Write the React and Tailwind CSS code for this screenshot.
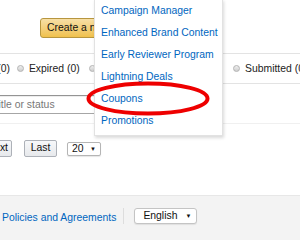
const Radio = () => (
  <span className="w-[7px] h-[7px] rounded-full border border-[#b3b3b3] bg-gradient-to-b from-[#eeeeee] to-[#cfcfcf] shrink-0" />
);

const menuItems = [
  "Campaign Manager",
  "Enhanced Brand Content",
  "Early Reviewer Program",
  "Lightning Deals",
  "Coupons",
  "Promotions",
];

const App = () => {
  return (
    <div className="relative w-[300px] h-[240px] overflow-hidden bg-white font-['Liberation_Sans',Arial,sans-serif] text-[10.4px] text-[#222]">

      {/* Header with create button */}
      <div className="h-[54px] pt-[18px] pl-[40px] border-b border-[#e3e3e3]">
        <button className="h-[20px] px-[6px] rounded-[3px] border border-[#b7963f] bg-gradient-to-b from-[#f7dfa5] to-[#f0c14b] text-[#111] whitespace-nowrap leading-none">
          Create a new coupon
        </button>
      </div>

      {/* Status filter */}
      <div className="h-[30px] flex items-center whitespace-nowrap border-b border-[#e3e3e3]">
        <span className="-ml-[34px] shrink-0">Active (0)</span>
        <div className="flex items-center ml-[7px] shrink-0">
          <Radio />
          <span className="ml-[5px]">Expired (0)</span>
        </div>
        <div className="flex items-center ml-[9px] shrink-0">
          <Radio />
          <span className="ml-[5px]">Running (0)</span>
        </div>
        <div className="flex items-center ml-[78px] shrink-0">
          <Radio />
          <span className="ml-[5px]">Submitted (0)</span>
        </div>
      </div>

      {/* Search */}
      <div className="h-[40px] pt-[11px] border-b border-[#f0f0f0]">
        <div className="-ml-[56px] w-[200px] h-[19px] border border-[#a6a6a6] border-t-[#949494] rounded-[2px] flex items-center pl-[1px] text-[#777] whitespace-nowrap shadow-[inset_0_1px_0_rgba(0,0,0,0.07)]">
          Search by title or status
        </div>
      </div>

      {/* Pagination */}
      <div className="h-[71px] pt-[16px] flex items-start">
        <button className="-ml-[22px] w-[34px] h-[17px] pr-[3px] rounded-[2px] border border-[#adb1b8] bg-gradient-to-b from-[#f7f8fa] to-[#e7e9ec] text-[#111] leading-none text-right">
          Next
        </button>
        <button className="ml-[12px] w-[33px] h-[17px] rounded-[2px] border border-[#adb1b8] bg-gradient-to-b from-[#f7f8fa] to-[#e7e9ec] text-[#111] leading-none">
          Last
        </button>
        <div className="ml-[10px] mt-[2px] w-[34px] h-[14px] rounded-[2px] border border-[#b5b5b5] bg-white flex items-center justify-between px-[4px] text-[#111] shadow-[0_1px_1px_rgba(0,0,0,0.1)]">
          <span>20</span>
          <span className="text-[6px]">▼</span>
        </div>
      </div>

      {/* Footer */}
      <div className="h-[45px] border-t border-[#e7e7e7] bg-[#f3f3f3] pt-[12px] pl-[2px] flex items-start whitespace-nowrap">
        <a className="mt-[2px] text-[#0066c0]">Policies and Agreements</a>
        <span className="ml-[7px] w-px h-[16px] bg-[#dddddd]" />
        <div className="ml-[10px] w-[63px] h-[16px] rounded-[3px] border border-[#c4c4c4] bg-white flex items-center justify-between pl-[8px] pr-[5px] text-[#111] shadow-[0_1px_1px_rgba(0,0,0,0.08)]">
          <span>English</span>
          <span className="text-[6px]">▼</span>
        </div>
      </div>

      {/* Dropdown menu */}
      <div className="absolute left-[94px] top-[-1px] w-[129px] pb-[3px] bg-white border border-[#e2e2e2] shadow-[1px_2px_3px_rgba(0,0,0,0.15)]">
        {menuItems.map((item) => (
          <div key={item} className="h-[22px] leading-[22px] pl-[6px] text-[#0066c0] whitespace-nowrap">
            {item}
          </div>
        ))}
      </div>

      {/* Red highlight ring */}
      <svg className="absolute left-[86px] top-[81px]" width="124" height="35" viewBox="0 0 124 35">
        <ellipse cx="62" cy="17.5" rx="59.5" ry="15" fill="none" stroke="#ee0000" strokeWidth="4" />
      </svg>

    </div>
  );
};

export default App;
